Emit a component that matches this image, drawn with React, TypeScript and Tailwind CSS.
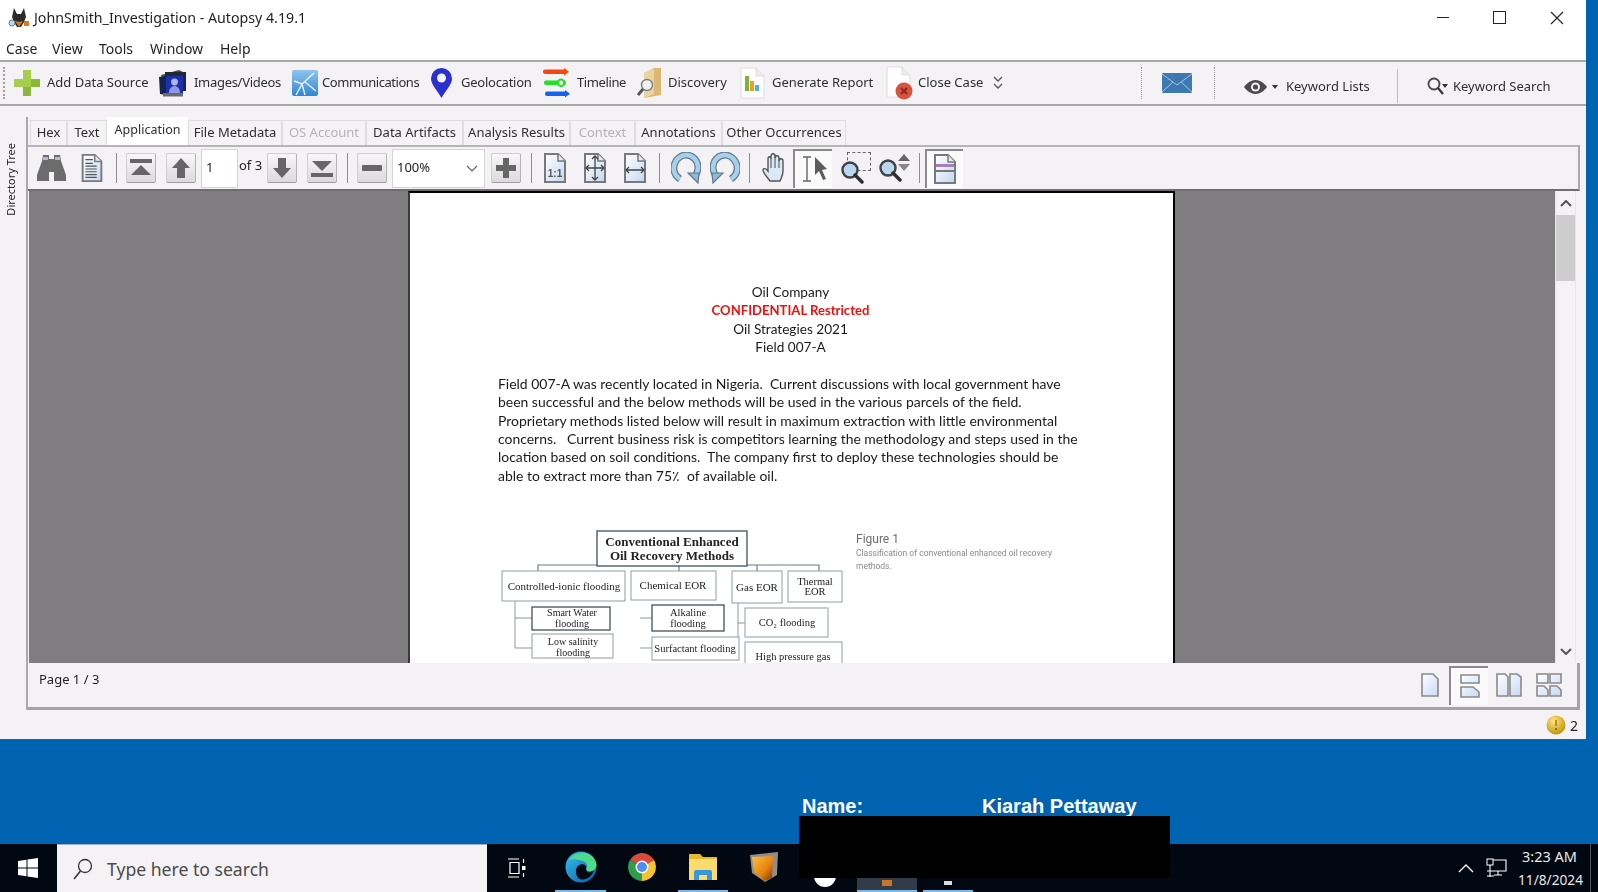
import React from 'react';

const ui = "font-['Noto_Sans','Liberation_Sans',sans-serif]";

function ToolItem({ className, labelClass, icon, label }: { className: string; labelClass: string; icon: React.ReactNode; label: string }) {
  return (
    <div className={`flex items-center shrink-0 ${className}`}>
      {icon}
      <span className={`whitespace-nowrap text-[13px] text-[#2e2e2e] ${labelClass}`}>{label}</span>
    </div>
  );
}

function Tab({ className, label, disabled }: { className: string; label: string; disabled?: boolean }) {
  return (
    <div className={`h-[25px] mt-[3px] shrink-0 flex items-center justify-center border border-b-0 border-[#dedcde] text-[13px] whitespace-nowrap ${disabled ? 'text-[#b4b4b4]' : 'text-[#2e2e2e]'} ${className}`}>
      {label}
    </div>
  );
}

function Sep({ className }: { className: string }) {
  return <div className={`w-px h-[30px] bg-[#8f8f8f] shrink-0 ${className}`} />;
}

function RaisedBtn({ className, children }: { className: string; children: React.ReactNode }) {
  return (
    <div className={`w-[30px] h-[30px] shrink-0 flex items-center justify-center rounded-[2px] bg-linear-to-b from-[#f8f6f8] to-[#dcdadc] border border-[#d0ced0] border-b-[#9c9c9c] border-r-[#b4b4b4] ${className}`}>
      {children}
    </div>
  );
}

function PageIcon({ children, w = 24, h = 32 }: { children?: React.ReactNode; w?: number; h?: number }) {
  return (
    <svg width={w} height={h} viewBox="0 0 24 32" className="shrink-0">
      <defs>
        <linearGradient id="pg" x1="0" y1="0" x2="1" y2="1">
          <stop offset="0" stopColor="#ffffff" />
          <stop offset="1" stopColor="#c4d8f0" />
        </linearGradient>
      </defs>
      <path d="M2 2h13l7 7v21H2z" fill="url(#pg)" stroke="#77797c" strokeWidth="2" />
      <path d="M15 2v7h7" fill="#e8e8e8" stroke="#77797c" strokeWidth="1.5" />
      {children}
    </svg>
  );
}

function Rotate({ flip }: { flip?: boolean }) {
  return (
    <svg width="30" height="32" viewBox="0 0 30 32" className={`shrink-0 ${flip ? '-scale-x-100' : ''}`}>
      <path d="M9 27C3 23 2 17 3.5 12 6 5 12 3 15 3c7 0 12 6 12 12 0 4-1 7-4 10" fill="none" stroke="#5d7c90" strokeWidth="7" />
      <path d="M9 27C3 23 2 17 3.5 12 6 5 12 3 15 3c7 0 12 6 12 12 0 4-1 7-4 10" fill="none" stroke="#a8d0ea" strokeWidth="4.5" />
      <path d="M17 21l11 0 -1 10z" fill="#8db8d6" stroke="#5d7c90" strokeWidth="1.2" />
    </svg>
  );
}

function Lens({ size = 24 }: { size?: number }) {
  return (
    <svg width={size} height={size} viewBox="0 0 24 24" className="shrink-0">
      <circle cx="10" cy="10" r="7.5" fill="#b9d7f0" stroke="#3e4246" strokeWidth="2.4" />
      <path d="M15 15l7 7" stroke="#2c2e30" strokeWidth="3.4" strokeLinecap="round" />
    </svg>
  );
}

function MainToolbar() {
  return (
    <div className="h-[46px] shrink-0 border-y-2 border-[#a9a9a9] bg-[#f5f2f6] flex items-center pl-[3px]">
      <div className="w-[3px] h-[32px] border-l-2 border-dotted border-[#a0a0a0] shrink-0" />
      <ToolItem
        className="ml-[8px]"
        labelClass="ml-[7px] w-[101px]"
        label="Add Data Source"
        icon={
          <svg width="26" height="26" viewBox="0 0 26 26" className="shrink-0">
            <path d="M9 0h8v9h9v8h-9v9H9v-9H0V9h9z" fill="#a5cf4a" />
            <path d="M9 17h8v9H9zM17 9h9v8h-9z" fill="#8cb83a" />
          </svg>
        }
      />
      <ToolItem
        className="ml-[10px]"
        labelClass="ml-[6px] w-[87px] tracking-[-0.3px]"
        label="Images/Videos"
        icon={
          <svg width="30" height="30" viewBox="0 0 30 30" className="shrink-0">
            <path d="M3 7l18-5 6 3v16L8 27z" fill="#4a4a52" />
            <rect x="7" y="4" width="21" height="19" fill="#23282f" />
            <rect x="8" y="8" width="17" height="17" fill="#1a2fb0" />
            <circle cx="16.5" cy="14" r="3.4" fill="#aeb6ea" />
            <path d="M11 25c0-5 3-7 5.5-7s5.500 2 5.500 7z" fill="#8f99e0" />
            <path d="M1 9l7-1v19l-6-1z" fill="#15224f" />
            <rect x="5" y="25" width="20" height="3.500" fill="#6a6a6a" />
          </svg>
        }
      />
      <ToolItem
        className="ml-[11px]"
        labelClass="ml-[4px] w-[97px] tracking-[-0.45px]"
        label="Communications"
        icon={
          <svg width="26" height="26" viewBox="0 0 26 26" className="shrink-0">
            <defs>
              <linearGradient id="cm" x1="0" y1="0" x2="0" y2="1">
                <stop offset="0" stopColor="#8fc4ee" />
                <stop offset="1" stopColor="#2e86d4" />
              </linearGradient>
            </defs>
            <rect width="26" height="26" rx="2" fill="url(#cm)" />
            <path d="M2 11l8 3 12-11M10 14l3 11M10 14l-6 11M13 12l11 9" stroke="#e8f3fb" strokeWidth="1.4" fill="none" />
          </svg>
        }
      />
      <ToolItem
        className="ml-[12px]"
        labelClass="ml-[9px] w-[70px] tracking-[-0.25px]"
        label="Geolocation"
        icon={
          <svg width="21" height="30" viewBox="0 0 21 30" className="shrink-0">
            <path d="M10.500 30C7 23 0 17 0 10.500a10.500 10.500 0 0 1 21 0C21 17 14 23 10.500 30z" fill="#2a2fd0" />
            <circle cx="10.500" cy="10" r="4.500" fill="#f4f4fb" />
          </svg>
        }
      />
      <ToolItem
        className="ml-[11px]"
        labelClass="ml-[7px] w-[48px] tracking-[-0.4px]"
        label="Timeline"
        icon={
          <svg width="28" height="30" viewBox="0 0 28 30" className="shrink-0">
            <rect x="1" y="1.500" width="24" height="4.500" rx="2" fill="#f04a12" />
            <path d="M22 0l5 3.700-5 3.700z" fill="#f04a12" />
            <rect x="2" y="12.500" width="22" height="4.500" rx="2" fill="#22e022" />
            <circle cx="19" cy="14.700" r="3.200" fill="#f5f2f6" stroke="#22e022" strokeWidth="2" />
            <rect x="3" y="23.500" width="22" height="4.500" rx="2" fill="#1464e8" />
            <path d="M23 22l5 3.700-5 3.700z" fill="#1464e8" />
          </svg>
        }
      />
      <ToolItem
        className="ml-[12px]"
        labelClass="ml-[6px] w-[60px]"
        label="Discovery"
        icon={
          <svg width="25" height="30" viewBox="0 0 25 30" className="shrink-0">
            <path d="M7 5l10-5h7v27l-17 3z" fill="#dcb877" />
            <path d="M7 5l10-5v26l-10 4z" fill="#ecd29e" />
            <circle cx="10" cy="17" r="5.500" fill="#f1f1f1" stroke="#7e7e7e" strokeWidth="1.400" />
            <path d="M6 21l-5 6" stroke="#555" strokeWidth="2.800" />
          </svg>
        }
      />
      <ToolItem
        className="ml-[12px]"
        labelClass="ml-[7px] w-[102px]"
        label="Generate Report"
        icon={
          <svg width="25" height="32" viewBox="0 0 25 32" className="shrink-0">
            <path d="M1 1h15l8 8v22H1z" fill="#ffffff" stroke="#dcdcdc" />
            <path d="M16 1v8h8" fill="#ededed" stroke="#dcdcdc" />
            <rect x="5" y="9" width="4" height="15" fill="#7fb23c" />
            <rect x="10" y="14" width="4" height="10" fill="#e8a030" />
            <rect x="15" y="18" width="4" height="6" fill="#55b0d8" />
          </svg>
        }
      />
      <ToolItem
        className="ml-[12px]"
        labelClass="ml-[5px] w-[67px]"
        label="Close Case"
        icon={
          <svg width="27" height="34" viewBox="0 0 27 34" className="shrink-0">
            <path d="M1 1h15l8 8v22H1z" fill="#ffffff" stroke="#dcdcdc" />
            <path d="M16 1v8h8" fill="#ededed" stroke="#dcdcdc" />
            <circle cx="18" cy="25" r="8.500" fill="#d8533f" />
            <path d="M15 22l6 6m0-6l-6 6" stroke="#8e2a1c" strokeWidth="2" />
          </svg>
        }
      />
      <svg width="10" height="14" viewBox="0 0 10 14" className="ml-[8px] shrink-0">
        <path d="M1 1l4 4 4-4M5 3v0M1 8l4 4 4-4" fill="none" stroke="#555" strokeWidth="1.300" />
      </svg>
      <div className="ml-[138px] w-px h-[32px] border-l border-dotted border-[#9a9a9a] shrink-0" />
      <svg width="30" height="20" viewBox="0 0 30 20" className="ml-[20px] shrink-0">
        <rect width="30" height="20" rx="1" fill="#3e78b2" />
        <path d="M0 1l15 11L30 1M0 19l11-10M30 19L19 9" fill="none" stroke="#a5c6e4" strokeWidth="1" />
      </svg>
      <div className="ml-[22px] w-px h-[32px] border-l border-dotted border-[#9a9a9a] shrink-0" />
      <div className="flex items-center mt-[8px]">
        <svg width="23" height="14" viewBox="0 0 23 14" className="ml-[29px] shrink-0">
          <path d="M0 7c3-4 7-7 11.500-7S20 3 23 7c-3 4-7 7-11.500 7S3 11 0 7z" fill="#4a4a4a" />
          <circle cx="11.500" cy="7" r="4.500" fill="#f5f2f6" />
          <circle cx="11.500" cy="7" r="2.600" fill="#4a4a4a" />
        </svg>
        <div className="ml-[5px] w-0 h-0 border-x-[3px] border-x-transparent border-t-[4px] border-t-[#333] shrink-0" />
        <span className="ml-[8px] w-[83px] whitespace-nowrap text-[13px] text-[#2e2e2e]">Keyword Lists</span>
      </div>
      <div className="ml-[28px] w-px h-[34px] bg-[#bdbdbd] shrink-0 mt-[6px]" />
      <div className="flex items-center mt-[8px]">
        <svg width="22" height="20" viewBox="0 0 22 20" className="ml-[29px] shrink-0">
          <circle cx="7" cy="7" r="5.500" fill="#f5f2f6" stroke="#444" strokeWidth="1.800" />
          <path d="M11 11l5 6" stroke="#333" strokeWidth="2.200" />
          <path d="M15 7h6l-3 4z" fill="#333" />
        </svg>
        <span className="ml-[4px] whitespace-nowrap text-[13px] text-[#2e2e2e]">Keyword Search</span>
      </div>
    </div>
  );
}

function Tabs() {
  return (
    <div className="h-[28px] ml-[2px] flex shrink-0">
      <Tab className="w-[37px]" label="Hex" />
      <Tab className="w-[40px]" label="Text" />
      <div className="h-[28px] w-[81px] shrink-0 bg-white flex items-center justify-center text-[12.500px] text-[#2e2e2e] pb-[2px]">Application</div>
      <Tab className="w-[94px]" label="File Metadata" />
      <Tab className="w-[84px]" label="OS Account" disabled />
      <Tab className="w-[97px]" label="Data Artifacts" />
      <Tab className="w-[107px]" label="Analysis Results" />
      <Tab className="w-[65px]" label="Context" disabled />
      <Tab className="w-[87px]" label="Annotations" />
      <Tab className="w-[124px]" label="Other Occurrences" />
    </div>
  );
}

function PdfToolbar() {
  return (
    <div className="h-[46px] shrink-0 border-t-2 border-[#b5b5b5] border-b-2 border-b-[#6f6d6f] border-r-2 border-r-[#a9a9a9] flex items-center bg-[#f5f2f6]">
      <svg width="29" height="26" viewBox="0 0 29 26" className="ml-[9px] shrink-0">
        <path d="M6 0h6v4h5V0h6l1 6 5 14v6H17v-9h-5v9H0v-6L5 6z" fill="#6c6c6c" />
        <rect x="6" y="2" width="5" height="3" fill="#a8c0d4" />
        <rect x="18" y="2" width="5" height="3" fill="#a8c0d4" />
      </svg>
      <PageIconLines className="ml-[14px]" />
      <Sep className="ml-[12px]" />
      <RaisedBtn className="ml-[9px]">
        <svg width="22" height="18" viewBox="0 0 22 18"><rect width="22" height="4" fill="#666" /><path d="M11 6l10 10H1z" fill="#666" /></svg>
      </RaisedBtn>
      <RaisedBtn className="ml-[10px]">
        <svg width="20" height="22" viewBox="0 0 20 22"><path d="M10 1l9 10h-5v10H6V11H1z" fill="#666" /></svg>
      </RaisedBtn>
      <div className="ml-[5px] w-[37px] h-[39px] shrink-0 bg-white border border-[#d5d3d5] flex items-center pl-[4px] text-[13px] text-[#222]">1</div>
      <div className="w-[29px] shrink-0 pl-[1px] pb-[4px] text-[13px] text-[#222] whitespace-nowrap">of 3</div>
      <RaisedBtn className="">
        <svg width="20" height="22" viewBox="0 0 20 22"><path d="M10 21l9-10h-5V1H6v10H1z" fill="#666" /></svg>
      </RaisedBtn>
      <RaisedBtn className="ml-[10px]">
        <svg width="22" height="18" viewBox="0 0 22 18"><path d="M11 12L1 2h20z" fill="#666" /><rect y="14" width="22" height="4" fill="#666" /></svg>
      </RaisedBtn>
      <Sep className="ml-[10px]" />
      <RaisedBtn className="ml-[9px]">
        <svg width="20" height="6" viewBox="0 0 20 6"><rect width="20" height="6" rx="1" fill="#666" /></svg>
      </RaisedBtn>
      <div className="ml-[5px] w-[93px] h-[39px] shrink-0 bg-white border border-[#d5d3d5] flex items-center justify-between pl-[4px] pr-[6px] text-[13px] text-[#222]">
        100%
        <svg width="12" height="7" viewBox="0 0 12 7"><path d="M1 1l5 5 5-5" fill="none" stroke="#666" strokeWidth="1.200" /></svg>
      </div>
      <RaisedBtn className="ml-[6px]">
        <svg width="20" height="20" viewBox="0 0 20 20"><path d="M7 0h6v7h7v6h-7v7H7v-7H0V7h7z" fill="#666" /></svg>
      </RaisedBtn>
      <Sep className="ml-[10px]" />
      <div className="ml-[11px] shrink-0">
        <PageIcon>
          <text x="12" y="25" textAnchor="middle" fontSize="10" fontWeight="700" fontFamily="Liberation Sans" fill="#555">1:1</text>
        </PageIcon>
      </div>
      <div className="ml-[16px] shrink-0">
        <PageIcon>
          <path d="M12 4v24M3 16h18M9 7l3-3 3 3M9 25l3 3 3-3M6 13l-3 3 3 3M18 13l3 3-3 3" fill="none" stroke="#444" strokeWidth="1.300" />
        </PageIcon>
      </div>
      <div className="ml-[16px] shrink-0">
        <PageIcon>
          <path d="M3 18h18M6 15l-3 3 3 3M18 15l3 3-3 3" fill="none" stroke="#444" strokeWidth="1.300" />
        </PageIcon>
      </div>
      <Sep className="ml-[12px]" />
      <div className="ml-[10px] w-[32px] flex justify-center shrink-0"><Rotate /></div>
      <div className="ml-[8px] w-[30px] flex justify-center shrink-0"><Rotate flip /></div>
      <Sep className="ml-[9px]" />
      <svg width="26" height="30" viewBox="0 0 26 30" className="ml-[12px] shrink-0">
        <path d="M8 28c-2-3-7-8-7-11 0-2 3-2 5 1V6c0-3 3-3 3 0V3c0-3 4-3 4 0v2c0-3 4-3 4 0v3c0-3 4-3 4 0v10c0 5-2 7-3 10z" fill="#dbe8f6" stroke="#555" strokeWidth="1.400" />
        <path d="M9 6v9M13 4v11M17 6v9" stroke="#555" strokeWidth="1.100" />
      </svg>
      <div className="ml-[5px] w-[39px] h-[39px] shrink-0 bg-[#fbfafb] border-l-2 border-t-2 border-[#8a8a8a] flex items-center justify-center">
        <svg width="30" height="30" viewBox="0 0 30 30">
          <path d="M4 3h8M4 27h8M8 3v24" stroke="#666" strokeWidth="1.400" fill="none" />
          <path d="M16 3l12 12-5 1 4 9-3 1-4-9-4 4z" fill="#5c5c5c" />
        </svg>
      </div>
      <div className="ml-[8px] w-[32px] relative shrink-0 h-[32px]">
        <div className="ml-[7px] mt-[0px] w-[24px] h-[19px] border border-dashed border-[#666]" />
        <div className="absolute left-0 top-[8px]"><Lens /></div>
      </div>
      <div className="ml-[6px] w-[32px] h-[28px] relative shrink-0">
        <div className="absolute left-0 top-[4px]"><Lens /></div>
        <div className="absolute right-0 top-0 w-0 h-0 border-x-[6px] border-x-transparent border-b-[7px] border-b-[#666]" />
        <div className="absolute right-0 top-[10px] w-0 h-0 border-x-[6px] border-x-transparent border-t-[7px] border-t-[#888]" />
      </div>
      <Sep className="ml-[9px]" />
      <div className="ml-[5px] w-[38px] h-[39px] shrink-0 bg-[#fbfafb] border-l-2 border-t-2 border-[#8a8a8a] flex items-center justify-center">
        <PageIcon>
          <rect x="3" y="11" width="18" height="3" fill="#a77fc0" />
          <rect x="3" y="17" width="18" height="2" fill="#777" />
        </PageIcon>
      </div>
    </div>
  );
}

function PageIconLines({ className }: { className: string }) {
  return (
    <div className={`shrink-0 ${className}`}>
      <PageIcon h={30}>
        <path d="M5 7h8M5 11h8M5 14h12M5 17h12M5 20h12M5 23h12M5 26h12" stroke="#555" strokeWidth="1.200" />
      </PageIcon>
    </div>
  );
}

function Box({ x, y, w, h, dark }: { x: number; y: number; w: number; h: number; dark?: boolean }) {
  return <rect x={x} y={y} width={w} height={h} fill="#fff" stroke={dark ? '#3f5060' : '#9aa6b0'} strokeWidth={dark ? 1.300 : 1.100} />;
}

function Diagram() {
  const label = 'Liberation Serif, serif';
  return (
    <svg width="765" height="150" viewBox="410 520 765 150" className="blur-[0.45px] block">
      <path d="M538 571v-6h281v6M679 566v5M757 565v6" fill="none" stroke="#6c7a86" strokeWidth="1.200" />
      <path d="M515 601v47h18M515 618h18M640 618h12M640 648h12M738 603v57M738 623h7" fill="none" stroke="#8b97a0" strokeWidth="1" />
      <Box x={597} y={531} w={150} h={35} dark />
      <Box x={502} y={571} w={123} h={30} />
      <Box x={631} y={571} w={85} h={29} />
      <Box x={732} y={571} w={50} h={32} />
      <Box x={788} y={571} w={54} h={31} />
      <Box x={532} y={607} w={78} h={23} dark />
      <Box x={532} y={634} w={81} h={24} />
      <Box x={652} y={605} w={72} h={26} dark />
      <Box x={652} y={637} w={87} h={23} />
      <Box x={745} y={608} w={83} h={29} />
      <Box x={745} y={642} w={97} h={30} />
      <g fontFamily={label} textAnchor="middle" fill="#222">
        <text x="672" y="546" fontSize="13" fontWeight="700">Conventional Enhanced</text>
        <text x="672" y="560" fontSize="13" fontWeight="700">Oil Recovery Methods</text>
        <text x="564" y="590" fontSize="11">Controlled-ionic flooding</text>
        <text x="673" y="589" fontSize="11">Chemical EOR</text>
        <text x="757" y="591" fontSize="11">Gas EOR</text>
        <text x="815" y="585" fontSize="10.500">Thermal</text>
        <text x="815" y="595" fontSize="10.500">EOR</text>
        <text x="572" y="616" fontSize="10">Smart Water</text>
        <text x="572" y="627" fontSize="10">flooding</text>
        <text x="573" y="645" fontSize="10">Low salinity</text>
        <text x="573" y="656" fontSize="10">flooding</text>
        <text x="688" y="616" fontSize="10.500">Alkaline</text>
        <text x="688" y="627" fontSize="10.500">flooding</text>
        <text x="695" y="652" fontSize="10.500">Surfactant flooding</text>
        <text x="787" y="626" fontSize="10.500">CO₂ flooding</text>
        <text x="793" y="660" fontSize="10.500">High pressure gas</text>
      </g>
      <g fontFamily="Roboto, sans-serif" fill="#8a8a8a">
        <text x="856" y="543" fontSize="12" fill="#6e6e6e">Figure 1</text>
        <text x="856" y="556" fontSize="8.500">Classification of conventional enhanced oil recovery</text>
        <text x="856" y="569" fontSize="8.500">methods.</text>
      </g>
    </svg>
  );
}

function PdfPage() {
  const lines = [
    'Field 007-A was recently located in Nigeria.  Current discussions with local government have',
    'been successful and the below methods will be used in the various parcels of the field.',
    'Proprietary methods listed below will result in maximum extraction with little environmental',
    'concerns.   Current business risk is competitors learning the methodology and steps used in the',
    'location based on soil conditions.  The company first to deploy these technologies should be',
    'able to extract more than 75٪  of available oil.',
  ];
  return (
    <div className="ml-[379px] w-[767px] bg-white border-t-2 border-x-2 border-t-black border-l-[#3a3a3a] border-r-black pt-[90px] font-['Lato','Noto_Sans',sans-serif] text-[13.6px] leading-[18.300px] text-[#1a1a1a]">
      <div className="text-center pr-[2px] blur-[0.3px]">
        <div>Oil Company</div>
        <div className="font-bold text-[13.100px] text-[#f01010]">CONFIDENTIAL Restricted</div>
        <div>Oil Strategies 2021</div>
        <div>Field 007-A</div>
      </div>
      <div className="mt-[19px] pl-[88px] text-[13.950px] blur-[0.3px]">
        {lines.map((l) => (
          <div key={l} className="whitespace-pre">{l}</div>
        ))}
      </div>
      <div className="mt-[35px]">
        <Diagram />
      </div>
    </div>
  );
}

function DocArea() {
  return (
    <div className="h-[472px] shrink-0 flex ml-[1px] mr-[4px]">
      <div className="w-[1527px] bg-[#7f7d7f] overflow-hidden">
        <PdfPage />
      </div>
      <div className="w-[21px] flex flex-col bg-[#f5f2f6] border-x border-[#e8e6e8]">
        <div className="h-[24px] flex items-center justify-center">
          <svg width="12" height="7" viewBox="0 0 12 7"><path d="M1 6l5-5 5 5" fill="none" stroke="#555" strokeWidth="2" /></svg>
        </div>
        <div className="h-[66px] bg-[#cdcdcd]" />
        <div className="flex-1" />
        <div className="h-[24px] flex items-center justify-center">
          <svg width="12" height="7" viewBox="0 0 12 7"><path d="M1 1l5 5 5-5" fill="none" stroke="#555" strokeWidth="2" /></svg>
        </div>
      </div>
    </div>
  );
}

function ViewIcon({ children, className }: { children: React.ReactNode; className: string }) {
  return (
    <svg width="26" height="24" viewBox="0 0 26 24" className={`shrink-0 ${className}`}>
      <defs>
        <linearGradient id="vw" x1="0" y1="0" x2="1" y2="1">
          <stop offset="0" stopColor="#ffffff" />
          <stop offset="1" stopColor="#c8daf2" />
        </linearGradient>
      </defs>
      <g fill="url(#vw)" stroke="#8a8a8a" strokeWidth="1.600">{children}</g>
    </svg>
  );
}

function PageFooter() {
  return (
    <div className="h-[47px] shrink-0 flex items-center pr-[15px] border-b-[3px] border-[#a4a4a4] border-r-[3px] bg-[#f5f2f6]">
      <span className="ml-[11px] pb-[10px] text-[13px] text-[#222]">Page 1 / 3</span>
      <ViewIcon className="ml-auto">
        <path d="M5 1h11l5 5v17H5z" />
      </ViewIcon>
      <div className="ml-[6px] w-[39px] h-[39px] shrink-0 bg-[#fbfafb] border-l-2 border-t-2 border-[#8a8a8a] flex items-center justify-center">
        <ViewIcon className="">
          <path d="M4 1h18v8H4zM4 13h12l6 5v5H4z" />
        </ViewIcon>
      </div>
      <ViewIcon className="ml-[8px]">
        <path d="M1 1h8l3 3v19H1zM14 1h7l4 3v19H14z" />
      </ViewIcon>
      <ViewIcon className="ml-[14px]">
        <path d="M1 1h11v9H1zM14 1h11v9H14zM1 13h7l4 4v6H1zM14 13h7l4 4v6H14z" />
      </ViewIcon>
    </div>
  );
}

function AppWindow() {
  return (
    <div className={`w-[1586px] h-[740px] shrink-0 bg-[#f5f2f6] flex flex-col blur-[0.3px] border-b border-[#4a5a6a] ${ui}`}>
      <div className="h-[35px] shrink-0 bg-white flex items-center pl-[8px] relative">
        <svg width="22" height="20" viewBox="0 0 22 20" className="shrink-0 mt-[1px]">
          <path d="M6 0l3 6h4l3-6 2 9-2 5-3 5H9L6 14 4 9z" fill="#2b2b2b" />
          <path d="M7 13l4 6 4-6-4 1z" fill="#d47a24" />
          <circle cx="4" cy="15" r="3" fill="#bcd6e6" stroke="#5a7f94" />
          <rect x="16" y="13" width="5" height="5" fill="#d47a24" />
        </svg>
        <span className="ml-[4px] text-[14.200px] text-[#1f1f1f] whitespace-nowrap">JohnSmith_Investigation - Autopsy 4.19.1</span>
        <div className="ml-auto flex items-center">
          <div className="w-[12px] h-px bg-[#222]" />
          <div className="ml-[44px] w-[13px] h-[13px] border border-[#222]" />
          <svg width="14" height="14" viewBox="0 0 14 14" className="ml-[44px] mr-[22px]">
            <path d="M1 1l12 12M13 1L1 13" stroke="#222" strokeWidth="1.100" />
          </svg>
        </div>
      </div>
      <div className="h-[25px] shrink-0 bg-white flex items-center text-[14px] text-[#1f1f1f] pl-[6px] pt-[2px]">
        <span className="w-[46px]">Case</span>
        <span className="w-[47px]">View</span>
        <span className="w-[51px]">Tools</span>
        <span className="w-[70px]">Window</span>
        <span>Help</span>
      </div>
      <MainToolbar />
      <div className="flex-1 flex pt-[11px] min-h-0">
        <div className="w-[26px] shrink-0 relative">
          <span className="absolute left-[3px] top-[26px] [writing-mode:vertical-rl] rotate-180 text-[11px] text-[#222] whitespace-nowrap">Directory Tree</span>
        </div>
        <div className="w-[1554px] h-[593px] shrink-0 flex flex-col border-l-2 border-[#a9a9a9]">
          <Tabs />
          <PdfToolbar />
          <DocArea />
          <PageFooter />
        </div>
      </div>
      <div className="h-[30px] shrink-0 flex items-center justify-end pr-[8px] pt-[2px]">
        <svg width="20" height="20" viewBox="0 0 20 20" className="shrink-0">
          <defs>
            <radialGradient id="wn" cx="0.4" cy="0.3" r="0.8">
              <stop offset="0" stopColor="#ffe680" />
              <stop offset="1" stopColor="#b88a00" />
            </radialGradient>
          </defs>
          <circle cx="10" cy="10" r="9.500" fill="url(#wn)" />
          <path d="M10 5v6" stroke="#9a7400" strokeWidth="1.400" />
          <circle cx="10" cy="14" r="1" fill="#7a5a00" />
        </svg>
        <span className="ml-[4px] text-[14px] text-[#222]">2</span>
      </div>
    </div>
  );
}

function TaskSlot({ className, children }: { className: string; children: React.ReactNode }) {
  return <div className={`h-[48px] shrink-0 flex items-center justify-center border-b-2 ${className}`}>{children}</div>;
}

function Taskbar() {
  return (
    <div className={`h-[48px] shrink-0 bg-[#010812] flex ${ui}`}>
      <div className="w-[57px] flex items-center justify-center shrink-0 pr-[2px]">
        <svg width="20" height="20" viewBox="0 0 20 20">
          <path d="M0 3l8.500-1.200V9.500H0zM9.500 1.600L20 0v9.500H9.500zM0 10.500h8.500v7.700L0 17zM9.500 10.500H20V20L9.500 18.400z" fill="#fff" />
        </svg>
      </div>
      <div className="w-[430px] shrink-0 bg-[#f5f2f6] flex items-center pl-[15px] border-t border-[#9fb2c8]">
        <svg width="22" height="24" viewBox="0 0 22 24" className="shrink-0">
          <circle cx="13" cy="9" r="6.500" fill="none" stroke="#333" strokeWidth="1.300" />
          <path d="M8.500 14L2 22" stroke="#333" strokeWidth="1.500" />
        </svg>
        <span className="ml-[13px] text-[17.600px] pt-[1px] text-[#4a4a4a]">Type here to search</span>
      </div>
      <div className="ml-[20px] w-[20px] shrink-0 flex items-center">
        <svg width="20" height="20" viewBox="0 0 20 20">
          <path d="M1 1h11M1 19h11M3 4.500h9v11H3z" fill="none" stroke="#fff" strokeWidth="1.200" />
          <rect x="15" y="8" width="3.500" height="4" fill="#fff" />
          <path d="M16.500 1v4M16.500 15v4" stroke="#fff" strokeWidth="1.200" />
        </svg>
      </div>
      <TaskSlot className="ml-[28px] w-[51px] border-[#76b9ed]">
        <svg width="32" height="32" viewBox="0 0 32 32">
          <defs>
            <linearGradient id="ed" x1="0" y1="0" x2="1" y2="1">
              <stop offset="0" stopColor="#35c1f1" />
              <stop offset="1" stopColor="#0c59a4" />
            </linearGradient>
          </defs>
          <circle cx="16" cy="16" r="15.500" fill="url(#ed)" />
          <path d="M4 9C8 2 20-1 27 5c4 4 6 9 3 13-2 3-8 3-9 0 2-2 2-6-3-8-6-2-11-2-14-1z" fill="#4fdc8a" />
          <path d="M11 20c0-5 5-8 9-6 2 2 1 4 1 4 0 4 5 4 8 1-2 7-9 11-14 9-3-1-4-5-4-8z" fill="#010812" />
        </svg>
      </TaskSlot>
      <TaskSlot className="ml-[11px] w-[50px] border-transparent">
        <svg width="28" height="28" viewBox="0 0 28 28">
          <path d="M14 14L1.900 7A14 14 0 0 1 26.100 7z" fill="#dc4a3c" />
          <path d="M14 14L26.100 7A14 14 0 0 1 14 28z" fill="#f4c430" />
          <path d="M14 14L14 28A14 14 0 0 1 1.900 7z" fill="#2f9e4a" />
          <circle cx="14" cy="14" r="6.500" fill="#fff" />
          <circle cx="14" cy="14" r="5" fill="#4f8ff0" />
        </svg>
      </TaskSlot>
      <TaskSlot className="ml-[11px] w-[50px] border-[#76b9ed]">
        <svg width="28" height="26" viewBox="0 0 28 26">
          <path d="M0 0h11l3 3h14v23H0z" fill="#e8b92f" />
          <path d="M0 5h28v21H0z" fill="#f8dc6e" />
          <path d="M5 26v-8a2 2 0 0 1 2-2h14a2 2 0 0 1 2 2v8h-5v-5h-8v5z" fill="#3a96dd" />
        </svg>
      </TaskSlot>
      <TaskSlot className="ml-[11px] w-[50px] border-transparent">
        <svg width="30" height="30" viewBox="0 0 30 30">
          <defs>
            <linearGradient id="sh" x1="0" y1="0" x2="1" y2="1">
              <stop offset="0" stopColor="#fcc040" />
              <stop offset="0.6" stopColor="#e8820e" />
              <stop offset="1" stopColor="#6a3404" />
            </linearGradient>
          </defs>
          <path d="M1 3l28-3-1 23-12 7L3 21z" fill="#8e8e8e" />
          <path d="M3 5l21-1-1 22-8 3L5 20z" fill="url(#sh)" />
        </svg>
      </TaskSlot>
      <TaskSlot className="ml-[11px] w-[50px] border-transparent">
        <div className="w-[22px] h-[22px] rounded-full bg-white mt-[18px]" />
      </TaskSlot>
      <TaskSlot className="ml-[7px] w-[60px] bg-[#333b48] border-[#76b9ed]">
        <span className="w-[10px] h-[6px] bg-[#c9742a] mt-[32px]" />
      </TaskSlot>
      <TaskSlot className="ml-[6px] w-[50px] border-[#76b9ed]">
        <span className="w-[8px] h-[4px] bg-[#dcdcdc] mt-[32px]" />
      </TaskSlot>
      <div className="ml-auto flex items-center pr-[7px]">
        <svg width="16" height="10" viewBox="0 0 16 10">
          <path d="M1 9l7-7 7 7" fill="none" stroke="#fff" strokeWidth="1.400" />
        </svg>
        <svg width="21" height="20" viewBox="0 0 21 20" className="ml-[12px]">
          <path d="M5 2h15v11H5M4 7v12M1 13h4M1 18h7M12 13v4M8 17h8" fill="none" stroke="#fff" strokeWidth="1.100" />
          <rect x="1" y="1" width="6" height="6" fill="#010812" stroke="#fff" strokeWidth="1" />
        </svg>
        <div className="ml-[11px] flex flex-col items-end text-[14.500px] leading-[23px] text-[#e8e8e8]">
          <span className="mr-[6px]">3:23 AM</span>
          <span className="text-[13.700px]">11/8/2024</span>
        </div>
        <div className="ml-[7px] w-px h-[48px] bg-[#555]" />
      </div>
    </div>
  );
}

export default function App() {
  return (
    <div className="relative w-[1598px] h-[892px] bg-[#0063b1] flex flex-col overflow-hidden">
      <AppWindow />
      <div className="flex-1 flex pt-[51px] pl-[802px] text-white font-bold text-[20px] font-['Liberation_Sans',sans-serif]">
        <span className="w-[180px]">Name:</span>
        <span>Kiarah Pettaway</span>
      </div>
      <Taskbar />
      <div className="absolute left-[799px] top-[816px] w-[371px] h-[62px] bg-black" />
    </div>
  );
}
